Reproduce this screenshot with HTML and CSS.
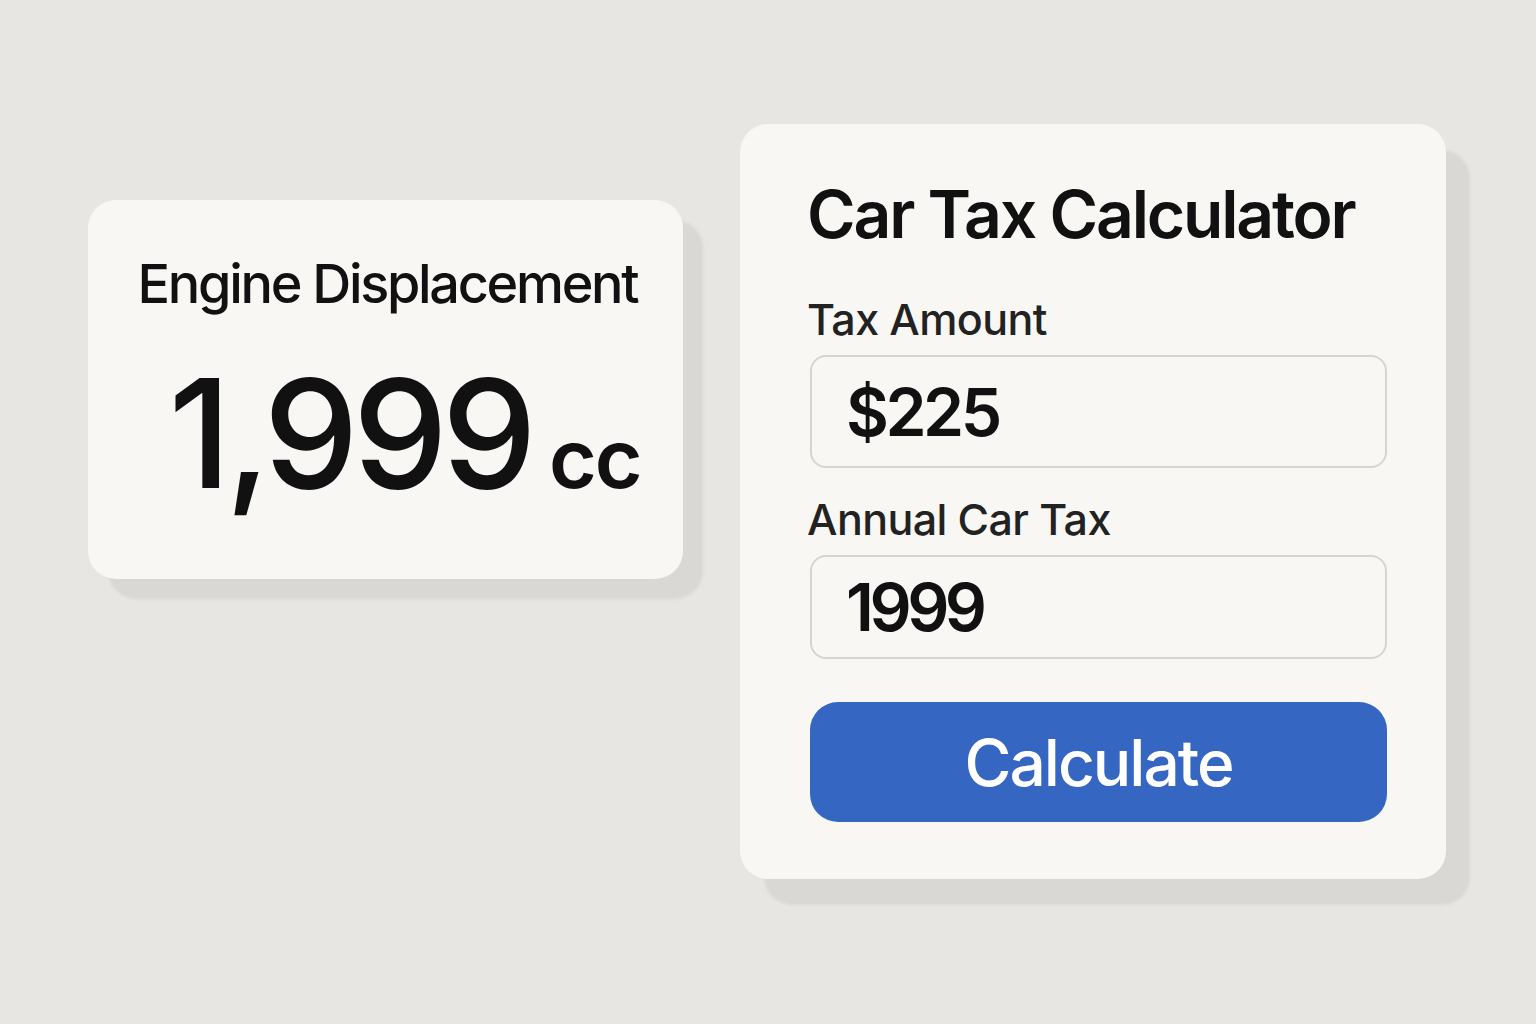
FILE: index.html
```html
<!DOCTYPE html>
<html lang="en">
<head>
<meta charset="UTF-8">
<meta name="viewport" content="width=device-width, initial-scale=1.0">
<title>Car Tax Calculator</title>
<link rel="stylesheet" href="styles.css">
</head>
<body>
<div class="stage">
    <div class="card engine-card">
        <h2 class="engine-title">Engine Displacement</h2>
        <div class="engine-value">
            <span class="engine-number">1,999</span>
            <span class="engine-unit">cc</span>
        </div>
    </div>

    <div class="card calc-card">
        <h1 class="calc-title">Car Tax Calculator</h1>
        <label class="field-label" for="tax-amount">Tax Amount</label>
        <input class="field-input" id="tax-amount" type="text" value="$225">
        <label class="field-label" for="annual-tax">Annual Car Tax</label>
        <input class="field-input short" id="annual-tax" type="text" value="1999">
        <button class="calc-btn">Calculate</button>
    </div>
</div>
</body>
</html>
```

FILE: styles.css
```css
html, body {
    margin: 0;
    padding: 0;
}
body {
    font-family: Inter, "Noto Sans", sans-serif;
    background-color: #e7e6e3;
    min-height: 100vh;
    color: #111;
}
.stage {
    display: flex;
    align-items: flex-start;
    gap: 57px;
    padding: 124px 0 0 88px;
}
.card {
    background-color: #f8f7f4;
    border-radius: 28px;
    box-sizing: border-box;
}
.engine-card {
    width: 595px;
    height: 379px;
    margin-top: 76px;
    padding-top: 57px;
    text-align: center;
    box-shadow: 20px 20px 3px #d9d8d5;
}
.engine-title {
    margin: 0;
    font-size: 54px;
    line-height: 1;
    font-weight: 500;
    letter-spacing: -2.3px;
    padding-left: 4px;
}
.engine-value {
    margin-top: 47px;
    display: flex;
    justify-content: center;
    align-items: baseline;
    padding-left: 38px;
}
.engine-number {
    font-size: 151px;
    line-height: 1;
    font-weight: 500;
    letter-spacing: -6px;
}
.engine-unit {
    font-size: 82px;
    line-height: 1;
    font-weight: 600;
    margin-left: 18px;
    letter-spacing: -2px;
}
.calc-card {
    width: 706px;
    height: 755px;
    padding: 57px 59px 0 70px;
    display: flex;
    flex-direction: column;
    box-shadow: 24px 26px 3px #d9d8d5;
}
.calc-title {
    margin: 0 0 0 -3px;
    font-size: 66px;
    line-height: 1;
    font-weight: 600;
    letter-spacing: -2.2px;
}
.field-label {
    margin: 51px 0 0 -3px;
    font-size: 43px;
    line-height: 1;
    font-weight: 500;
    color: #222;
    letter-spacing: -0.6px;
}
.field-input {
    margin-top: 14px;
    height: 113px;
    box-sizing: border-box;
    border: 2px solid #d6d5d2;
    border-radius: 16px;
    background: transparent;
    padding: 0 0 0 34px;
    font-family: inherit;
    font-size: 66px;
    font-weight: 600;
    letter-spacing: -3.5px;
    color: #111;
    outline: none;
}
.field-input.short {
    height: 104px;
    letter-spacing: -4.5px;
}
.field-input + .field-label {
    margin-top: 30px;
}
.calc-btn {
    margin-top: 43px;
    height: 120px;
    border: none;
    border-radius: 28px;
    background-color: #3566c2;
    color: #fff;
    font-family: inherit;
    font-size: 64px;
    font-weight: 500;
    letter-spacing: -2px;
    cursor: pointer;
}
```
